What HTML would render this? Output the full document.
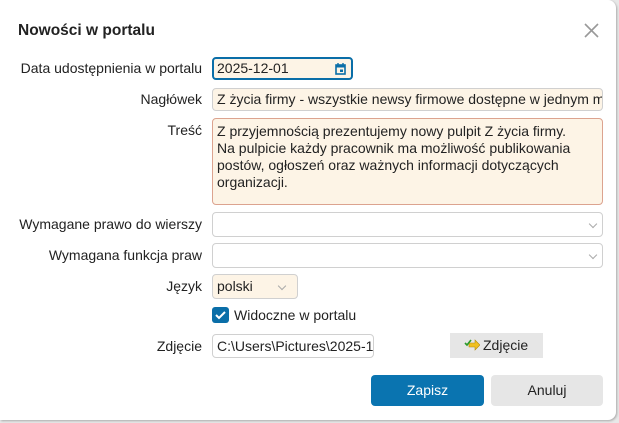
<!DOCTYPE html>
<html><head><meta charset="utf-8"><style>
body{margin:0;width:619px;height:423px;background:#e8e8e8;position:relative;overflow:hidden;font-family:"Liberation Sans",sans-serif;font-size:14px;color:#222}
.dlg{position:absolute;left:0;top:0;width:616px;height:420px;background:#fff;border-radius:0 8px 8px 0;box-shadow:1px 1px 2px #aaa}
.a{position:absolute}
.lbl{position:absolute;right:414px;text-align:right;white-space:nowrap}
.in{position:absolute;box-sizing:border-box;border:1px solid #d0d0d0;border-radius:4px;background:#fff;padding:0 5px;white-space:nowrap;overflow:hidden}
.chev{position:absolute;right:6px;top:6px;width:5px;height:5px;border-right:1px solid #aaa;border-bottom:1px solid #aaa;transform:rotate(45deg)}
</style></head><body><div class="dlg">
<div class="a" style="left:18px;top:22px;font-size:15.5px;font-weight:bold">Nowości w portalu</div>
<svg class="a" style="left:584px;top:23px" width="15" height="15"><path d="M1 1L14 14M14 1L1 14" stroke="#999" stroke-width="1.6"/></svg>

<div class="lbl" style="top:60px">Data udostępnienia w portalu</div>
<div class="in" style="left:212px;top:57px;width:141px;height:23px;border:2px solid #0a6ea8;background:#fdf4e6;line-height:19px;padding-left:3px">2025-12-01
<svg style="position:absolute;right:5px;top:4px" width="11" height="12"><rect x="1" y="2" width="9" height="9" fill="none" stroke="#0a6ea8" stroke-width="1.6"/><rect x="1" y="2" width="9" height="2.5" fill="#0a6ea8"/><rect x="5" y="6.5" width="3" height="2.5" fill="#0a6ea8"/><path d="M3 0v3M8 0v3" stroke="#0a6ea8" stroke-width="1.4"/></svg></div>

<div class="lbl" style="top:91px">Nagłówek</div>
<div class="in" style="left:212px;top:88px;width:391px;height:23px;background:#fdf4e6;line-height:21px;padding-left:4px">Z życia firmy - wszystkie newsy firmowe dostępne w jednym miejscu</div>

<div class="lbl" style="top:122px">Treść</div>
<div class="in" style="left:212px;top:118px;width:391px;height:87px;background:#fdf4e6;border-color:#dca38f;line-height:17px;padding:4px 4px;white-space:normal">Z przyjemnością prezentujemy nowy pulpit Z życia firmy.<br>Na pulpicie każdy pracownik ma możliwość publikowania<br>postów, ogłoszeń oraz ważnych informacji dotyczących<br>organizacji.</div>

<div class="lbl" style="top:216px">Wymagane prawo do wierszy</div>
<div class="in" style="left:212px;top:212px;width:391px;height:25px"><div class="chev" style="top:8px"></div></div>

<div class="lbl" style="top:247px">Wymagana funkcja praw</div>
<div class="in" style="left:212px;top:243px;width:391px;height:25px"><div class="chev" style="top:8px"></div></div>

<div class="lbl" style="top:278px">Język</div>
<div class="in" style="left:212px;top:274px;width:86px;height:25px;background:#fdf4e6;line-height:23px;padding-left:4px">polski<div class="chev" style="top:8px;right:12px"></div></div>

<div class="a" style="left:212px;top:307px;width:17px;height:16px;background:#0a6ea8;border-radius:3px"><svg width="17" height="16"><path d="M4 8l3 3 6-6" stroke="#fff" stroke-width="2" fill="none"/></svg></div>
<div class="a" style="left:234px;top:307px">Widoczne w portalu</div>

<div class="lbl" style="top:338px">Zdjęcie</div>
<div class="in" style="left:212px;top:334px;width:162px;height:24px;line-height:22px;padding-left:4px">C:\Users\Pictures\2025-12-04_09h36</div>
<div class="a" style="left:450px;top:333px;width:93px;height:25px;background:#e6e6e6;line-height:25px"><svg style="position:absolute;left:14px;top:6px" width="16" height="12"><path d="M5 4h6V1l5 5-5 5V8H5z" fill="#f0c020" stroke="#b08a10" stroke-width=".6"/><path d="M1 4l2 2 4-5" stroke="#2a9a2a" stroke-width="1.6" fill="none"/></svg><span style="position:absolute;left:33px">Zdjęcie</span></div>

<div class="a" style="left:371px;top:375px;width:113px;height:31px;background:#0a74b0;border-radius:4px;color:#fff;text-align:center;line-height:31px">Zapisz</div>
<div class="a" style="left:491px;top:375px;width:112px;height:31px;background:#e6e6e6;border-radius:4px;text-align:center;line-height:31px">Anuluj</div>
</div></body></html>
